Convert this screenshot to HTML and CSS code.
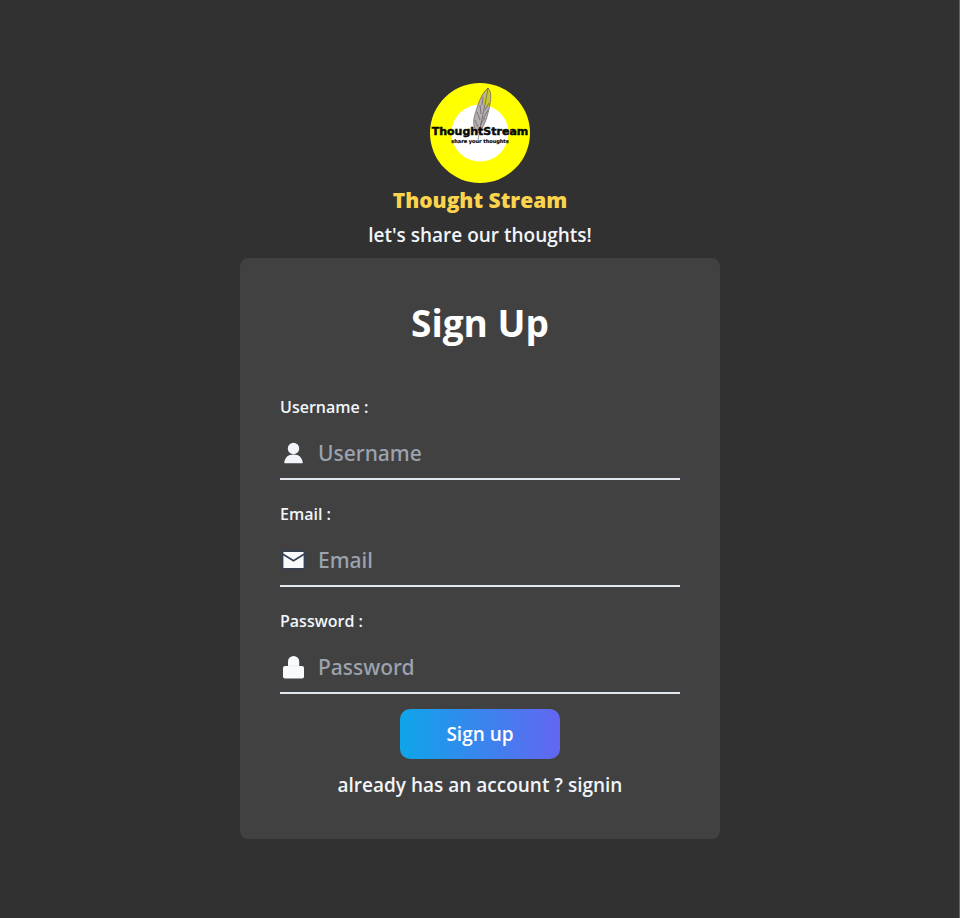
FILE: index.html
```html
<!DOCTYPE html>
<html lang="en">
<head>
<meta charset="utf-8">
<title>Thought Stream - Sign Up</title>
<link rel="stylesheet" href="styles.css">
</head>
<body>
<main class="page">
  <header class="brand">
    <svg class="logo" viewBox="0 0 100 100" aria-hidden="true">
      <circle cx="50" cy="50" r="50" fill="#ffff00"/>
      <circle cx="50" cy="50" r="28.5" fill="#fff"/>
      <path d="M58 5C52 9 47 23 44 35c-1 6 0 12 4 15 6-5 9-15 11-24 2-8 3-18-1-21z" fill="#b5aeb0"/>
      <path d="M58 5C61 9 60 18 59 24L54 21C54 14 55 9 58 5z" fill="#c8c62e"/>
      <path d="M58 5C56 18 52 34 48 57M58 5C52 9 47 23 44 35c-1 6 0 12 4 15 6-5 9-15 11-24 2-8 3-18-1-21M53 14l-1 8M50 22l1 9M47 29l3 8M45 37l3 7M59 20l-4 7M58 27l-5 9M55 35l-5 7" fill="none" stroke="#554d50" stroke-width=".6"/>
      <text class="logo-name" x="50" y="52" text-anchor="middle">ThoughtStream</text>
      <text class="logo-tag" x="50" y="60" text-anchor="middle">share your thoughts</text>
    </svg>
    <p class="brand-name">Thought Stream</p>
    <p class="tagline">let's share our thoughts!</p>
  </header>
  <form class="card">
    <h1 class="title">Sign Up</h1>
    <div class="field">
      <label class="label" for="username">Username :</label>
      <div class="control">
        <svg class="icon" viewBox="0 0 28 28" aria-hidden="true"><circle cx="13.5" cy="9.500" r="5.7" fill="#f1f5f9"/><path d="M4.300 24.200C4.300 18.800 8 15.400 13.500 15.400S22.700 18.800 22.700 24.200z" fill="#f1f5f9"/></svg>
        <input class="input" id="username" type="text" placeholder="Username">
      </div>
    </div>
    <div class="field">
      <label class="label" for="email">Email :</label>
      <div class="control">
        <svg class="icon" viewBox="0 0 28 28" aria-hidden="true"><rect x="2.700" y="5.300" width="21.600" height="17.300" rx="1" fill="#f8fafc" stroke="#334155" stroke-width="1.400"/><path d="M3 8.300l10.500 6.500L24 8.300" fill="none" stroke="#334155" stroke-width="1.800"/></svg>
        <input class="input" id="email" type="email" placeholder="Email">
      </div>
    </div>
    <div class="field">
      <label class="label" for="password">Password :</label>
      <div class="control">
        <svg class="icon" viewBox="0 0 28 28" aria-hidden="true"><path d="M8 14V8.500a5.600 5.600 0 0 1 11.200 0V14z" fill="#f8fafc"/><rect x="3" y="13" width="21" height="12.500" rx="2" fill="#f8fafc"/><path d="M8 12.800h11.200" stroke="#dcdfe3" stroke-width=".6"/></svg>
        <input class="input" id="password" type="password" placeholder="Password">
      </div>
    </div>
    <button class="submit" type="submit">Sign up</button>
    <p class="switch">already has an account ? <a class="link" href="#signin">signin</a></p>
  </form>
</main>
</body>
</html>
```
FILE: styles.css
```css
* { box-sizing: border-box; }

body {
  margin: 0;
  background: #313131;
  color: #f1f5f9;
  font-family: "Segoe UI", "Open Sans", "Noto Sans", sans-serif;
  font-weight: 600;
}

p, h1 { margin: 0; }

.page {
  min-height: 100vh;
  display: flex;
  flex-direction: column;
  align-items: center;
  justify-content: center;
  padding: 20px 16px 16px;
  box-shadow: inset -1px 0 #1b74b8;
}

.brand {
  display: flex;
  flex-direction: column;
  align-items: center;
  margin-bottom: 6px;
}

.logo { width: 100px; height: 100px; }

.logo-name {
  font: 900 11px "DejaVu Sans", sans-serif;
  fill: #0a0a0a;
  stroke: #0a0a0a;
  stroke-width: 0.5px;
}

.logo-tag {
  font: 700 5px "DejaVu Sans", sans-serif;
  fill: #0a0a0a;
  stroke: #0a0a0a;
  stroke-width: 0.2px;
}

.brand-name {
  color: #fcd34d;
  font-size: 21px;
  line-height: 35px;
  font-weight: 800;
}

.tagline { font-size: 19px; line-height: 34px; }

.card {
  width: 100%;
  max-width: 480px;
  padding: 40px;
  border-radius: 8px;
  background: #414141;
  display: flex;
  flex-direction: column;
}

.title {
  margin-bottom: 40px;
  color: #fff;
  font-size: 37px;
  line-height: 50px;
  font-weight: 700;
  text-align: center;
}

.field { margin-bottom: 15px; }

.label {
  display: block;
  margin-bottom: 2px;
  font-size: 16px;
  line-height: 38px;
}

.control {
  display: flex;
  align-items: center;
  height: 52px;
  border-bottom: 2px solid #e2e8f0;
}

.icon { width: 28px; height: 28px; flex: none; }

.input {
  flex: 1;
  min-width: 0;
  padding: 0 10px;
  border: 0;
  outline: 0;
  background: transparent;
  color: #f1f5f9;
  font-family: "Segoe UI", "Noto Sans", sans-serif;
  font-size: 21px;
  font-weight: 500;
}

.input::placeholder { color: #9ca3af; }

.submit {
  align-self: center;
  width: 160px;
  height: 50px;
  border: 0;
  border-radius: 10px;
  background: linear-gradient(to right, #0ea5e9, #6366f1);
  color: #fff;
  font: inherit;
  font-size: 19px;
}

.switch {
  margin-top: 12px;
  font-size: 19px;
  line-height: 28px;
  text-align: center;
}

.link { color: inherit; text-decoration: none; }
```
